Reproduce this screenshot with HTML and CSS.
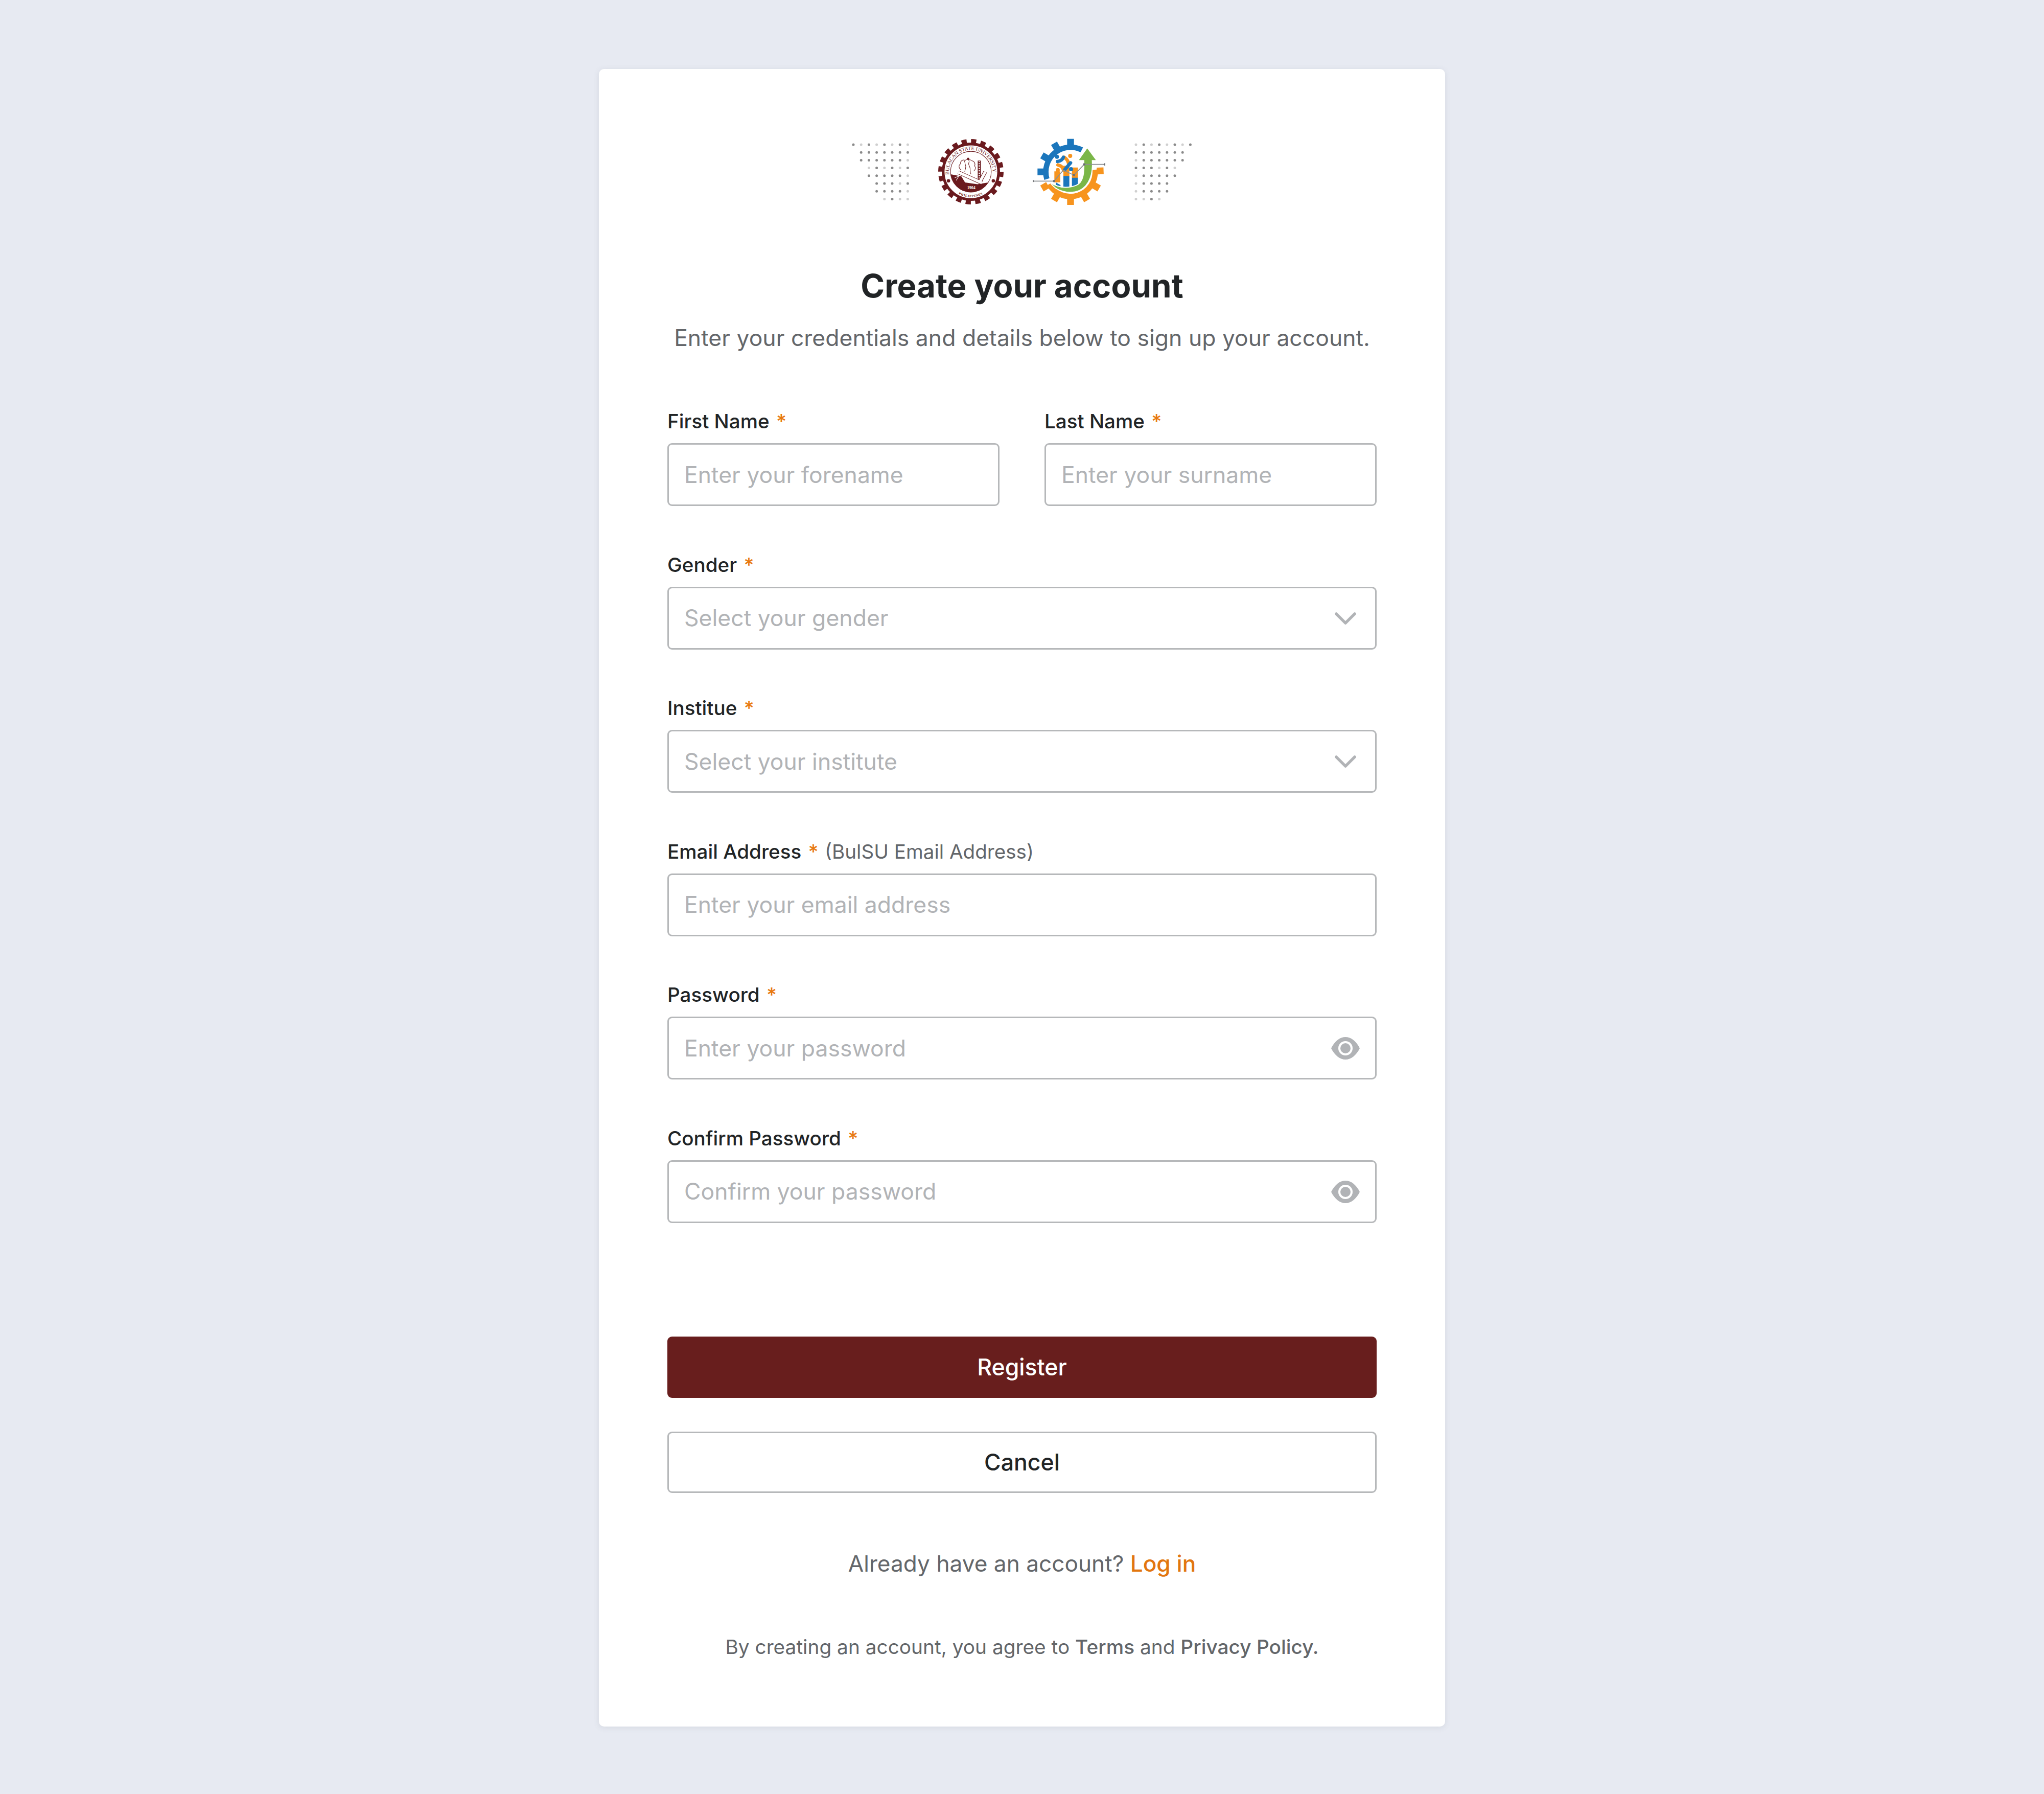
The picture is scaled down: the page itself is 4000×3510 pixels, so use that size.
FILE: index.html
```html
<!DOCTYPE html>
<html lang="en">
<head>
  <meta charset="UTF-8" />
  <title>Create your account</title>
  <link rel="stylesheet" href="styles.css">
</head>
<body>
  <main class="card">
    <div class="logos">
      <svg class="dots" viewBox="0 0 112 112" width="112" height="112">
        <path class="dot-dark" d="M3 3h0M33.400 3h0M63.800 3h0M94.200 3h0M18.200 18.200h0M33.400 18.200h0M48.600 18.200h0M63.800 18.200h0M79 18.200h0M94.200 18.200h0M109.400 18.200h0M18.200 33.400h0M33.400 33.400h0M48.600 33.400h0M63.800 33.400h0M79 33.400h0M94.200 33.400h0M48.600 48.600h0M79 48.600h0M109.400 48.600h0M33.400 63.800h0M48.600 63.800h0M63.800 63.800h0M79 63.800h0M94.200 63.800h0M48.600 79h0M63.800 79h0M79 79h0M109.400 79h0M48.600 94.200h0M63.800 94.200h0M79 94.200h0M94.200 94.200h0M79 109.400h0"/>
        <path class="dot-light" d="M18.200 3h0M48.600 3h0M79 3h0M109.400 3h0M109.400 33.400h0M33.400 48.600h0M63.800 48.600h0M94.200 48.600h0M109.400 63.800h0M94.200 79h0M109.400 94.200h0M63.800 109.400h0M94.200 109.400h0M109.400 109.400h0"/>
      </svg>

      <svg class="seal" viewBox="165 65 382 380" width="128" height="128">
        <circle class="seal-teeth" cx="356" cy="255" r="178" pathLength="200"/>
        <circle class="seal-band" cx="356" cy="255" r="162"/>
        <circle class="seal-line" cx="356" cy="255" r="119"/>
        <path id="sealTop" fill="none" d="M229 272A128 128 0 1 1 483 272"/>
        <path id="sealBottom" fill="none" d="M284 385A150 150 0 0 0 428 385"/>
        <text class="seal-text"><textPath href="#sealTop" textLength="420">BULACAN STATE UNIVERSITY</textPath></text>
        <text class="seal-small"><textPath href="#sealBottom" textLength="146">PHILIPPINES</textPath></text>
        <circle class="seal-fill" cx="225" cy="308" r="10"/>
        <circle class="seal-fill" cx="487" cy="308" r="10"/>
        <path class="seal-fill" d="M238 270L300 282L322 318L395 328L457 318A119 119 0 0 1 238 270Z"/>
        <text class="seal-year" x="358" y="356" text-anchor="middle">1904</text>
        <path class="seal-line" d="M300 245c-18-12-16-30-4-36-4-16 14-28 26-20 10-10 30-8 38 2 14 0 24 16 18 30 8 10 4 26-6 30"/>
        <path class="seal-line" d="M335 180c10 4 14 16 8 24-2 12 6 18 8 30 2 12-2 24 6 36M316 190c8 10 4 20 10 30 2 14-6 26-6 36"/>
        <circle class="seal-fill" cx="340" cy="180" r="7"/>
        <path class="seal-pillar" d="M405 190V302"/>
        <path class="seal-pillar-ticks" d="M405 194V298"/>
        <path class="seal-bar-edge" d="M282 258L420 320M440 255L405 320"/>
        <path class="seal-bar" d="M282 258L420 320M440 255L405 320"/>
        <path class="seal-scratch" d="M262 290L290 278M270 306L285 282"/>
      </svg>

      <svg class="emblem" viewBox="70 55 426 390" width="142" height="130">
        <g class="tooth-blue">
          <rect x="272" y="57" width="40" height="40" transform="rotate(0 292 251)"/>
          <rect x="272" y="57" width="40" height="40" transform="rotate(-30 292 251)"/>
          <rect x="272" y="57" width="40" height="40" transform="rotate(-60 292 251)"/>
          <rect x="272" y="57" width="40" height="40" transform="rotate(-90 292 251)"/>
        </g>
        <g class="tooth-orange">
          <rect x="272" y="57" width="40" height="40" transform="rotate(-120 292 251)"/>
          <rect x="272" y="57" width="40" height="40" transform="rotate(-150 292 251)"/>
          <rect x="272" y="57" width="40" height="40" transform="rotate(180 292 251)"/>
          <rect x="272" y="57" width="40" height="40" transform="rotate(150 292 251)"/>
          <rect x="272" y="57" width="40" height="40" transform="rotate(120 292 251)"/>
          <rect x="272" y="57" width="40" height="40" transform="rotate(88 292 251)"/>
        </g>
        <path class="ring-blue" d="M153 293A145 145 0 0 1 358 122"/>
        <path class="ring-orange" d="M166 323A145 145 0 0 0 436 238"/>
        <path class="bar-orange" d="M197 248H232V312H197ZM250 215H285V276H250ZM300 225H335V286H300Z"/>
        <path class="bar-blue" d="M250 275H285V345H250ZM300 285H335V338H300ZM205 312L233 328V340L205 328Z"/>
        <circle class="head-blue" cx="212" cy="162" r="12"/>
        <circle class="head-orange" cx="290" cy="157" r="12"/>
        <circle class="head-orange" cx="217" cy="240" r="12"/>
        <circle class="head-blue" cx="295" cy="235" r="12"/>
        <path class="arm-orange" d="M255 165C270 175 278 190 280 200M218 210C235 215 248 225 250 240"/>
        <path class="arm-blue" d="M215 190C235 188 245 178 250 165M258 238C270 225 282 210 292 198"/>
        <path class="swoosh" d="M172 312C220 345 275 348 325 330C370 312 372 250 370 185H335L390 108L447 185H420C425 260 405 330 345 360C285 385 205 365 172 312Z"/>
        <path class="graph-line" d="M70 305H195L250 240L312 270L372 207H493"/>
        <g class="graph-dots">
          <circle cx="70" cy="305" r="7"/>
          <circle cx="195" cy="305" r="7"/>
          <circle cx="312" cy="270" r="7"/>
          <circle cx="372" cy="207" r="7"/>
          <circle cx="493" cy="207" r="7"/>
        </g>
      </svg>

      <svg class="dots" viewBox="0 0 112 112" width="112" height="112">
        <path class="dot-dark" d="M18.200 3h0M48.600 3h0M79 3h0M109.400 3h0M3 18.200h0M18.200 18.200h0M33.400 18.200h0M48.600 18.200h0M63.800 18.200h0M79 18.200h0M94.200 18.200h0M18.200 33.400h0M33.400 33.400h0M48.600 33.400h0M63.800 33.400h0M79 33.400h0M94.200 33.400h0M3 48.600h0M18.200 48.600h0M33.400 48.600h0M63.800 48.600h0M18.200 63.800h0M33.400 63.800h0M48.600 63.800h0M63.800 63.800h0M79 63.800h0M18.200 79h0M33.400 79h0M48.600 79h0M63.800 79h0M18.200 94.200h0M33.400 94.200h0M48.600 94.200h0M63.800 94.200h0M33.400 109.400h0"/>
        <path class="dot-light" d="M3 3h0M33.400 3h0M63.800 3h0M94.200 3h0M3 33.400h0M48.600 48.600h0M79 48.600h0M3 63.800h0M3 79h0M3 94.200h0M3 109.400h0M18.200 109.400h0M48.600 109.400h0"/>
      </svg>
    </div>

    <h1 class="title">Create your account</h1>
    <p class="subtitle">Enter your credentials and details below to sign up your account.</p>

    <form class="form">
      <div class="row">
        <div class="field">
          <label class="label" for="firstName">First Name <span class="req">*</span></label>
          <input class="control" type="text" id="firstName" placeholder="Enter your forename" />
        </div>
        <div class="field">
          <label class="label" for="lastName">Last Name <span class="req">*</span></label>
          <input class="control" type="text" id="lastName" placeholder="Enter your surname" />
        </div>
      </div>

      <div class="field">
        <label class="label" for="gender">Gender <span class="req">*</span></label>
        <div class="control-wrap">
          <select class="control select" id="gender">
            <option>Select your gender</option>
          </select>
          <svg class="chevron" viewBox="0 0 42 24" width="42" height="24"><path d="M3 3L21 21L39 3"/></svg>
        </div>
      </div>

      <div class="field">
        <label class="label" for="institute">Institue <span class="req">*</span></label>
        <div class="control-wrap">
          <select class="control select" id="institute">
            <option>Select your institute</option>
          </select>
          <svg class="chevron" viewBox="0 0 42 24" width="42" height="24"><path d="M3 3L21 21L39 3"/></svg>
        </div>
      </div>

      <div class="field">
        <label class="label" for="email">Email Address <span class="req">*</span> <span class="hint">(BulSU Email Address)</span></label>
        <input class="control" type="email" id="email" placeholder="Enter your email address" />
      </div>

      <div class="field">
        <label class="label" for="password">Password <span class="req">*</span></label>
        <div class="control-wrap">
          <input class="control" type="password" id="password" placeholder="Enter your password" />
          <svg class="eye" viewBox="0 0 56 44" width="56" height="44">
            <path class="eye-shape" d="M0 22C7 8 17 0 28 0S49 8 56 22C49 36 39 44 28 44S7 36 0 22Z"/>
            <circle class="eye-ring" cx="28" cy="22" r="14"/>
            <circle class="eye-shape" cx="28" cy="22" r="10"/>
          </svg>
        </div>
      </div>

      <div class="field">
        <label class="label" for="confirm">Confirm Password <span class="req">*</span></label>
        <div class="control-wrap">
          <input class="control" type="password" id="confirm" placeholder="Confirm your password" />
          <svg class="eye" viewBox="0 0 56 44" width="56" height="44">
            <path class="eye-shape" d="M0 22C7 8 17 0 28 0S49 8 56 22C49 36 39 44 28 44S7 36 0 22Z"/>
            <circle class="eye-ring" cx="28" cy="22" r="14"/>
            <circle class="eye-shape" cx="28" cy="22" r="10"/>
          </svg>
        </div>
      </div>

      <div class="actions">
        <button class="btn btn-primary" type="submit">Register</button>
        <button class="btn btn-outline" type="button">Cancel</button>
      </div>
    </form>

    <p class="login">Already have an account? <a class="login-link" href="#">Log in</a></p>
    <p class="terms">By creating an account, you agree to <b class="terms-link">Terms</b> and <b class="terms-link">Privacy Policy.</b></p>
  </main>
</body>
</html>
```

FILE: styles.css
```css
* { box-sizing: border-box; }
body { margin: 0; min-height: 3510px; padding-top: 135px; background: #e7eaf2; font-family: Inter, "Liberation Sans", sans-serif; color: #212426; display: flex; justify-content: center; align-items: flex-start; }

.card { width: 1656px; height: 3243px; padding: 137px 134px 0; background: #fff; border-radius: 10px; box-shadow: 0 2px 12px rgba(80, 90, 110, 0.12); }

.logos { display: flex; justify-content: center; align-items: center; gap: 57px; height: 128px; margin-left: -1px; }
.logos svg { flex: none; }
.dot-dark, .dot-light { fill: none; stroke-width: 5; stroke-linecap: round; }
.dot-dark { stroke: #8a8a8a; }
.dot-light { stroke: #cfcfcf; }

.seal-teeth { fill: none; stroke: #6a1a1e; stroke-width: 26; stroke-dasharray: 5.4 4.6; }
.seal-band { fill: #fff; stroke: #6a1a1e; stroke-width: 16; }
.seal-line { fill: none; stroke: #6a1a1e; stroke-width: 3; }
.seal-fill { fill: #6a1a1e; }
.seal-text { font-family: "Liberation Serif", serif; font-size: 30px; fill: #6a1a1e; }
.seal-small { font-family: "Liberation Serif", serif; font-size: 19px; font-weight: 700; fill: #6a1a1e; }
.seal-year { font-family: "Liberation Serif", serif; font-size: 24px; font-weight: 700; fill: #fff; }
.seal-pillar { fill: none; stroke: #6a1a1e; stroke-width: 18; }
.seal-pillar-ticks { fill: none; stroke: #fff; stroke-width: 8; stroke-dasharray: 5 5; }
.seal-bar-edge { fill: none; stroke: #6a1a1e; stroke-width: 22; }
.seal-bar { fill: none; stroke: #fff; stroke-width: 16; }
.seal-scratch { fill: none; stroke: #fff; stroke-width: 3; }

.tooth-blue, .head-blue { fill: #1b76bc; }
.tooth-orange, .head-orange { fill: #f7941e; }
.ring-blue, .ring-orange { fill: none; stroke-width: 32; }
.ring-blue { stroke: #1b76bc; }
.ring-orange { stroke: #f7941e; }
.bar-orange { fill: #f7941e; }
.bar-blue { fill: #1b76bc; }
.arm-blue, .arm-orange { fill: none; stroke-width: 20; stroke-linecap: round; }
.arm-blue { stroke: #1b76bc; }
.arm-orange { stroke: #f7941e; }
.swoosh { fill: #7ab648; stroke: #fff; stroke-width: 6; }
.graph-line { fill: none; stroke: #8c8f92; stroke-width: 5; }
.graph-dots { fill: #6d7073; }

.title { margin: 119px 0 0; font-size: 63.5px; line-height: 80px; font-weight: 700; text-align: center; color: #212426; }
.subtitle { margin: 32px 0 0; font-size: 44.5px; line-height: 60px; text-align: center; color: #63666a; }

.form { margin-top: 109px; display: flex; flex-direction: column; gap: 90.6px; }
.row { display: grid; grid-template-columns: 650px 650px; column-gap: 88px; }
.field { display: flex; flex-direction: column; }
.label { font-size: 38.6px; line-height: 48px; font-weight: 500; margin-bottom: 19px; color: #212426; }
.req { color: #e8790f; margin-left: 3px; }
.hint { margin-left: 2px; font-weight: 400; color: #63666a; }

.control-wrap { position: relative; }
.control { display: block; width: 100%; height: 123px; padding: 0 30px; border: 3px solid #b6b8ba; border-radius: 9px; background: #fff; font-family: inherit; font-size: 44.5px; color: #212426; outline: none; }
.control::placeholder { color: #b1b3b6; opacity: 1; }
.select { appearance: none; color: #b1b3b6; }

.chevron { position: absolute; right: 40px; top: 50px; fill: none; }
.chevron path { fill: none; stroke: #b1b3b6; stroke-width: 5.5; stroke-linecap: round; stroke-linejoin: round; }
.eye { position: absolute; right: 33px; top: 40px; }
.eye-shape { fill: #b1b3b6; }
.eye-ring { fill: #fff; }

.actions { margin-top: 131px; display: flex; flex-direction: column; gap: 66px; }
.btn { display: block; width: 100%; height: 120px; border-radius: 9px; font-family: inherit; font-size: 44.6px; font-weight: 500; }
.btn-primary { background: #681e1d; border: none; color: #fff; }
.btn-outline { background: #fff; border: 3px solid #b6b8ba; color: #212426; }

.login { margin: 108px 0 0; font-size: 44.2px; line-height: 60px; text-align: center; color: #63666a; }
.login-link { color: #e2760f; text-decoration: none; font-weight: 500; }
.terms { margin: 108px 0 0; font-size: 38.8px; line-height: 50px; text-align: center; color: #63666a; }
.terms-link { font-weight: 500; }
```
